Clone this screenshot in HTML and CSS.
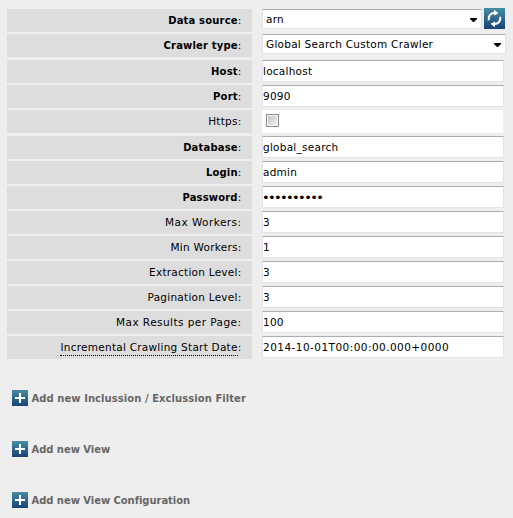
FILE: index.html
```html
<!DOCTYPE html>
<html lang="en">
<head>
<meta charset="utf-8">
<title>Crawler settings</title>
<link rel="stylesheet" href="styles.css">
</head>
<body>
<svg class="defs" width="0" height="0" aria-hidden="true">
  <defs>
    <linearGradient id="blue" x1="0" y1="0" x2="0" y2="1"><stop offset="0" stop-color="#468ca2"/><stop offset="1" stop-color="#174377"/></linearGradient>
    <symbol id="plus" viewBox="0 0 16 16"><rect width="16" height="16" fill="url(#blue)"/><path d="M8 3v10M3 8h10" stroke="#fff" stroke-width="2" fill="none"/></symbol>
  </defs>
</svg>
<main>
  <div class="row"><div class="label"><b>Data source</b>:</div><div class="select short"><span>arn</span><i class="arrow"></i></div>
    <svg class="refresh" viewBox="0 0 21 21"><rect width="21" height="21" fill="url(#blue)"/><g fill="none" stroke="#fff" stroke-width="2"><path d="M4.800 12.200C4 8 6.500 5 11 4.700"/><path d="M16.200 8.800C17 13 14.500 16 10 16.300"/></g><path d="M10 1.800L14.500 5.200L10 7.500ZM11 13.500L6.500 15.800L11 19.200Z" fill="#fff"/></svg></div>
  <div class="row second"><div class="label"><b>Crawler type</b>:</div><div class="select"><span>Global Search Custom Crawler</span><i class="arrow"></i></div></div>
  <div class="row"><div class="label"><b>Host</b>:</div><div class="input">localhost</div></div>
  <div class="row"><div class="label"><b>Port</b>:</div><div class="input">9090</div></div>
  <div class="row https"><div class="label">Https:</div><div class="check"><i class="box"></i></div></div>
  <div class="row"><div class="label"><b>Database</b>:</div><div class="input">global_search</div></div>
  <div class="row"><div class="label"><b>Login</b>:</div><div class="input">admin</div></div>
  <div class="row"><div class="label"><b>Password</b>:</div><div class="input dots">••••••••••</div></div>
  <div class="row"><div class="label wide">Max Workers:</div><div class="input">3</div></div>
  <div class="row"><div class="label">Min Workers:</div><div class="input">1</div></div>
  <div class="row"><div class="label">Extraction Level:</div><div class="input">3</div></div>
  <div class="row"><div class="label">Pagination Level:</div><div class="input">3</div></div>
  <div class="row"><div class="label wide">Max Results per Page:</div><div class="input">100</div></div>
  <div class="row"><div class="label"><span class="hint">Incremental Crawling Start Date</span>:</div><div class="input wide">2014-10-01T00:00:00.000+0000</div></div>
  <div class="actions">
    <div class="add filter"><svg><use href="#plus"/></svg><span>Add new Inclussion / Exclussion Filter</span></div>
    <div class="add"><svg><use href="#plus"/></svg><span>Add new View</span></div>
    <div class="add"><svg><use href="#plus"/></svg><span>Add new View Configuration</span></div>
  </div>
</main>
</body>
</html>
```
FILE: styles.css
```css
* { box-sizing: border-box; }
body { margin: 0; background: #eee; color: #000; font: 10.5px/14px Verdana, "DejaVu Sans", sans-serif; letter-spacing: 0.25px; overflow: hidden; }
b { font-size: 10px; letter-spacing: 0.17px; }
.defs { position: absolute; }
main { padding: 9px 7px 0; }
.row { display: flex; align-items: flex-start; height: 25px; white-space: nowrap; }
.row.second, .row.https { height: 26px; }
.label { width: 245px; height: 23px; margin-right: 10px; padding: 4px 10.5px 0 0; background: #ddd; text-align: right; }
.wide { letter-spacing: 0.45px; }
.hint { display: inline-block; height: 16px; border-bottom: 1px dotted #000; }
.input { width: 242px; height: 22px; padding: 3px 0 0 0; background: #fff; border: 1px solid #e2e3ea; border-top-color: #abadb3; border-radius: 1px; }
.dots { padding-top: 4px; font-size: 13px; letter-spacing: -1.65px; text-indent: -1px; }
.select { display: flex; justify-content: space-between; width: 244px; height: 20px; padding: 2px 4px 0 3px; background: #fff; border: 1px solid #e2e3ea; border-top-color: #abadb3; border-radius: 1px; }
.select.short { width: 220px; }
.arrow { width: 7px; height: 4px; margin-top: 6px; background: #000; clip-path: polygon(0 0, 100% 0, 100% 25%, 57% 100%, 43% 100%, 0 25%); }
.refresh { width: 21px; height: 21px; margin: -1px 0 0 2px; }
.check { width: 241px; height: 23px; padding: 4px; background: #fff; }
.box { display: block; width: 13px; height: 13px; border: 1px solid #8e8f8f; background: linear-gradient(135deg, #bfc4cc, #f4f4f4) 50% / 9px 9px no-repeat #f4f4f4; }
.actions { padding: 29px 5px 0; }
.add { display: flex; height: 51px; gap: 3.5px; color: #666; font-size: 10px; font-weight: bold; letter-spacing: -0.05px; white-space: nowrap; }
.filter { letter-spacing: 0.06px; }
.add svg { width: 16px; height: 16px; }
.add span { padding-top: 2px; }
```
